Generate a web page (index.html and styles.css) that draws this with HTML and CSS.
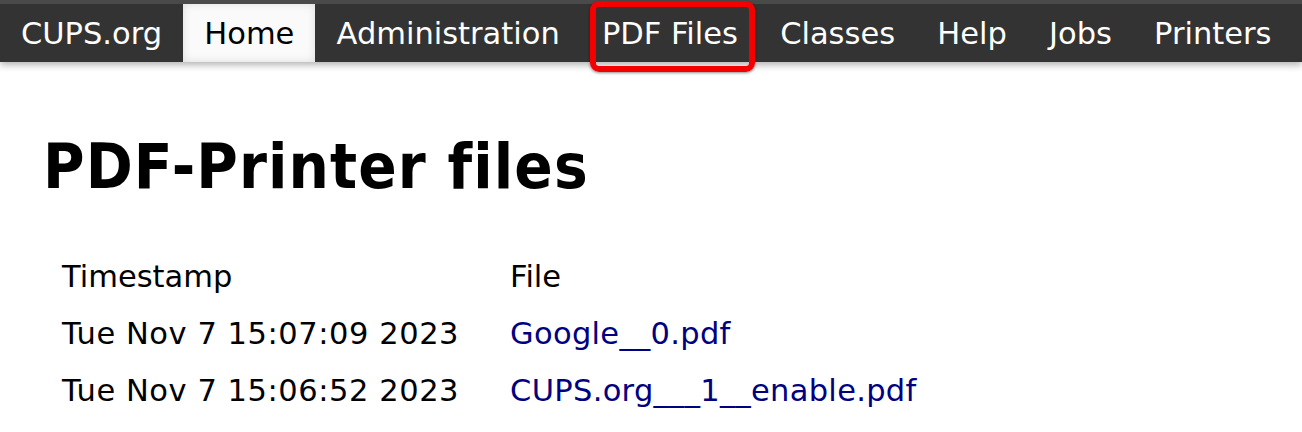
FILE: index.html
```html
<!DOCTYPE html>
<html>
<head>
<meta charset="utf-8">
<title>PDF-Printer files</title>
<link rel="stylesheet" href="styles.css">
</head>
<body>
<nav class="header">
  <a class="nav-item" href="#">CUPS.org</a>
  <a class="nav-item active" href="#">Home</a>
  <a class="nav-item" href="#">Administration</a>
  <a class="nav-item marked" href="#">PDF Files</a>
  <a class="nav-item" href="#">Classes</a>
  <a class="nav-item" href="#">Help</a>
  <a class="nav-item" href="#">Jobs</a>
  <a class="nav-item" href="#">Printers</a>
</nav>
<main class="body">
  <h1 class="title">PDF-Printer files</h1>
  <table class="files">
    <tr><th class="c1">Timestamp</th><th>File</th></tr>
    <tr><td class="c1 date">Tue Nov 7 15:07:09 2023</td><td><a href="#">Google__0.pdf</a></td></tr>
    <tr><td class="c1 date">Tue Nov 7 15:06:52 2023</td><td><a href="#">CUPS.org___1__enable.pdf</a></td></tr>
  </table>
</main>
</body>
</html>
```

FILE: styles.css
```css
html, body {
  margin: 0;
  padding: 0;
  background: #fff;
}
body {
  font-family: "DejaVu Sans", "Liberation Sans", sans-serif;
  color: #000;
}
.header {
  display: flex;
  background: #333;
  border-top: 4px solid #4a4a4a;
  height: 58px;
  box-shadow: 0 3px 7px rgba(0, 0, 0, 0.3);
}
.nav-item {
  display: block;
  padding: 2px 21.1px 0 21.1px;
  line-height: 56px;
  font-size: 30.5px;
  color: #fff;
  text-decoration: none;
  white-space: nowrap;
}
.nav-item:first-child {
  padding-left: 21px;
}
.nav-item.active {
  background: #fafafa;
  color: #000;
  box-shadow: inset 0 0 9px rgba(0, 0, 0, 0.12);
}
.nav-item.marked {
  position: relative;
}
.nav-item.marked::after {
  content: "";
  position: absolute;
  top: -3px;
  left: 9px;
  right: 4px;
  bottom: -10px;
  border: 6px solid #f40000;
  border-radius: 9px;
  box-shadow: 0 1px 3px rgba(0, 0, 0, 0.45);
}
.body {
  padding: 73px 0 0 43px;
}
.title {
  margin: 0;
  font-family: "DejaVu Sans Condensed", "DejaVu Sans", sans-serif;
  font-stretch: condensed;
  font-weight: bold;
  font-size: 63px;
  line-height: 63px;
  letter-spacing: 1.1px;
}
.files {
  margin: 50px 0 0 19px;
  border-collapse: collapse;
  font-size: 30.5px;
}
.files th, .files td {
  padding: 0;
  text-align: left;
  font-weight: normal;
  line-height: 57px;
  white-space: nowrap;
}
.files .c1 {
  padding-right: 51px;
}
.files .date {
  letter-spacing: 0.55px;
}
.files a {
  color: #000080;
  text-decoration: none;
  letter-spacing: 0.3px;
}
```
